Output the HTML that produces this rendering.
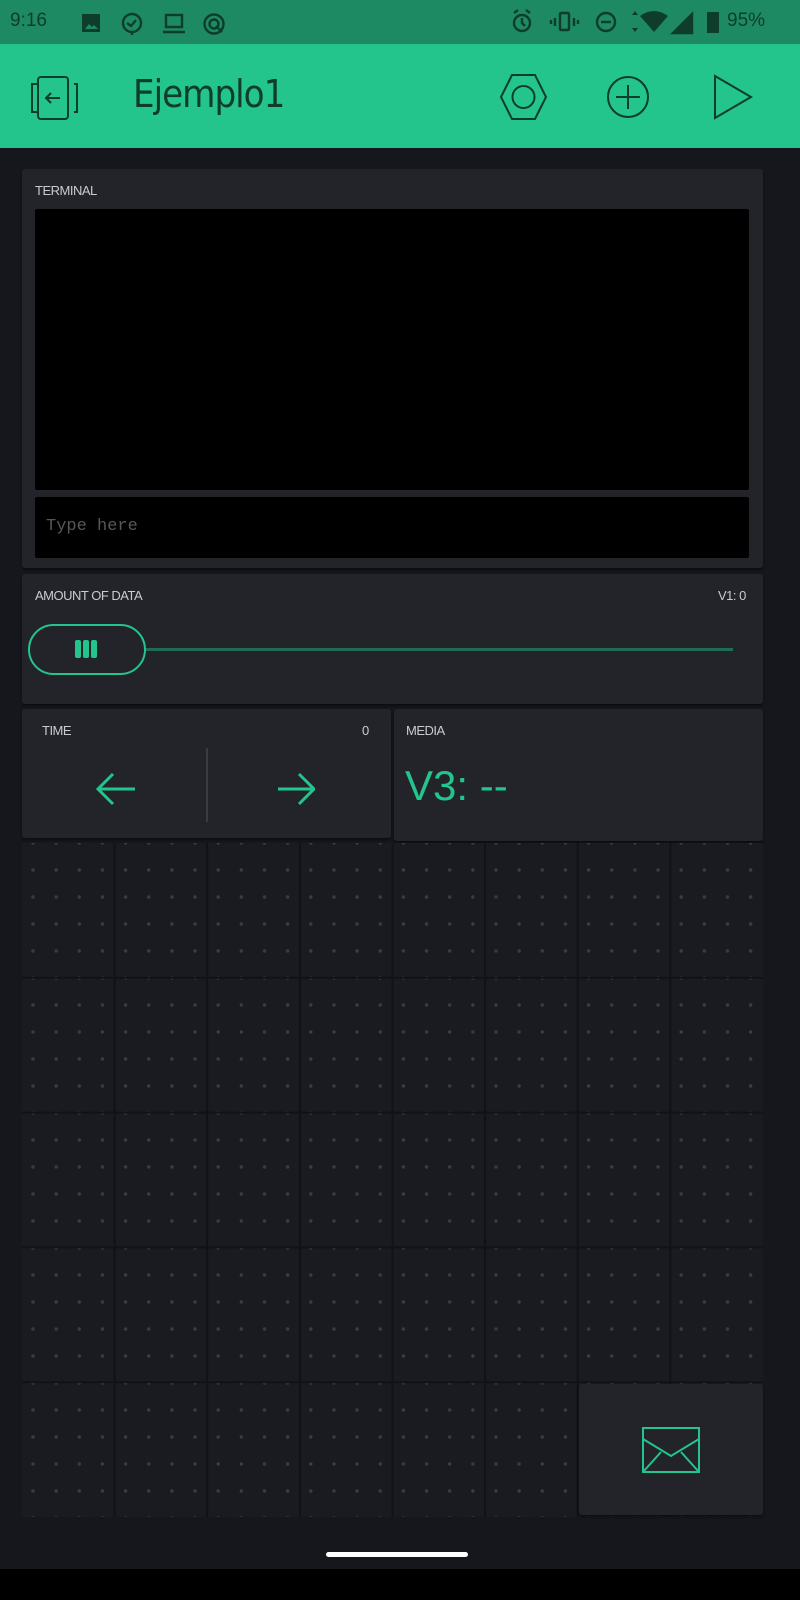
<!DOCTYPE html>
<html><head><meta charset="utf-8"><style>
*{margin:0;padding:0;box-sizing:border-box}
body{width:800px;height:1600px;background:#16171c;position:relative;overflow:hidden;font-family:"DejaVu Sans","Liberation Sans",sans-serif}
.abs{position:absolute}
.card{position:absolute;background:#222429;border-radius:3px;box-shadow:0 2px 2px #0c0d10}
.lbl{position:absolute;color:#c9cbcf;font-size:13px;letter-spacing:-0.5px;font-family:"Liberation Sans",sans-serif}
</style></head><body>
<!-- status bar -->
<div class="abs" style="left:0;top:0;width:800px;height:44px;background:#1d8a63"></div>
<div class="abs" style="left:10px;top:10px;font-size:19px;font-family:'Liberation Sans',sans-serif;color:#0e3d2b">9:16</div>
<svg class="abs" style="left:80px;top:12px" width="160" height="24" viewBox="0 0 160 24" fill="none" stroke="#0e3d2b" stroke-width="2.4">
<rect x="2" y="2" width="18" height="18" fill="#0e3d2b" stroke="none"/><path d="M5 17l4-5 3 3 2-2 4 4z" fill="#1d8a63" stroke="none"/>
<circle cx="52" cy="11" r="9"/><path d="M47 11l4 3 5-6M52 20v3"/>
<rect x="86" y="3" width="16" height="12"/><path d="M83 20h22"/>
<circle cx="134" cy="12" r="9.5"/><circle cx="134" cy="12" r="4.5"/><path d="M136 14l6 6"/>
</svg>
<svg class="abs" style="left:505px;top:8px" width="235" height="28" viewBox="0 0 235 28" fill="none" stroke="#0e3d2b" stroke-width="2.4">
<circle cx="17" cy="15" r="8"/><path d="M17 10v5l3 3M9 5l4-3M25 5l-4-3"/>
<rect x="55" y="5" width="9" height="17" rx="1"/><path d="M50 10v8M69 10v8M46 12v4M73 12v4"/>
<circle cx="101" cy="14" r="9"/><path d="M96 14h10"/>
<path d="M127 7l3-4 3 4zM127 20l3 4 3-4z" fill="#0e3d2b" stroke="none"/>
<path d="M135 8q14-10 28 0l-14 16z" fill="#0e3d2b" stroke="none"/>
<path d="M168 25l19-19v19z" fill="#0e3d2b"/>
<rect x="202" y="4" width="12" height="21" fill="#0e3d2b" stroke="none"/>
</svg>
<div class="abs" style="left:727px;top:10px;font-size:19px;font-family:'Liberation Sans',sans-serif;color:#0e3d2b">95%</div>
<!-- app bar -->
<div class="abs" style="left:0;top:44px;width:800px;height:104px;background:#24c48d"></div>
<svg class="abs" style="left:28px;top:74px" width="52" height="48" viewBox="0 0 52 48" fill="none" stroke="#0e3d2b" stroke-width="2">
<path d="M9 10H4v28h5"/><rect x="10" y="3" width="30" height="42" rx="3"/><path d="M46 10h3v28h-3"/><path d="M32 24H19m4-5l-5 5 5 5"/>
</svg>
<div class="abs" style="left:133px;top:72px;font-size:38px;color:#0e3d2b;font-family:'DejaVu Sans Condensed','DejaVu Sans',sans-serif;letter-spacing:-1px">Ejemplo1</div>
<svg class="abs" style="left:498px;top:72px" width="270" height="50" viewBox="0 0 270 50" fill="none" stroke="#0e3d2b" stroke-width="2">
<path d="M14 3h23l11 22-11 22H14L3 25z"/><circle cx="25.5" cy="25" r="11"/>
<circle cx="130" cy="25" r="20"/><path d="M130 13v24M118 25h24"/>
<path d="M217 4v42l36-21z"/>
</svg>
<!-- terminal -->
<div class="card" style="left:22px;top:169px;width:741px;height:399px"></div>
<div class="lbl" style="left:35px;top:183px">TERMINAL</div>
<div class="abs" style="left:35px;top:209px;width:714px;height:281px;background:#000;border-radius:2px"></div>
<div class="abs" style="left:35px;top:497px;width:714px;height:61px;background:#000;border-radius:2px"></div>
<div class="abs" style="left:46px;top:517px;color:#55575c;font-size:17px;font-family:'Liberation Mono',monospace">Type here</div>
<!-- slider -->
<div class="card" style="left:22px;top:574px;width:741px;height:130px"></div>
<div class="lbl" style="left:35px;top:588px">AMOUNT OF DATA</div>
<div class="lbl" style="left:718px;top:588px">V1: 0</div>
<div class="abs" style="left:145px;top:648px;width:588px;height:3px;background:#1f6c53"></div>
<div class="abs" style="left:28px;top:624px;width:118px;height:51px;border:2px solid #24c48d;border-radius:26px;background:#222429"></div>
<div class="abs" style="left:75px;top:640px;width:6px;height:18px;background:#24c48d;border-radius:2px"></div>
<div class="abs" style="left:83px;top:640px;width:6px;height:18px;background:#24c48d;border-radius:2px"></div>
<div class="abs" style="left:91px;top:640px;width:6px;height:18px;background:#24c48d;border-radius:2px"></div>
<!-- time -->
<div class="card" style="left:22px;top:709px;width:369px;height:129px"></div>
<div class="lbl" style="left:42px;top:723px">TIME</div>
<div class="lbl" style="left:362px;top:723px">0</div>
<div class="abs" style="left:206px;top:748px;width:2px;height:74px;background:#3a3c41"></div>
<svg class="abs" style="left:95px;top:770px" width="220" height="40" viewBox="0 0 220 40" fill="none" stroke="#24c48d" stroke-width="3">
<path d="M40 19H3M18 4L3 19l15 15"/><path d="M183 19h36M204 4l15 15-15 15"/>
</svg>
<!-- media -->
<div class="card" style="left:394px;top:709px;width:369px;height:132px"></div>
<div class="lbl" style="left:406px;top:723px">MEDIA</div>
<div class="abs" style="left:405px;top:762px;color:#24c48d;font-size:42px;font-family:'Liberation Sans',sans-serif">V3: --</div>
<!-- grid -->
<svg class="abs" style="left:22px;top:843px" width="741" height="674">
<defs>
<pattern id="d" width="23.15" height="27" patternUnits="userSpaceOnUse" x="0" y="13.5">
<circle cx="11" cy="13.5" r="1.7" fill="#3a3c42"/>
</pattern>
</defs>
<rect width="741" height="674" fill="#1a1b20"/>
<rect width="741" height="674" fill="url(#d)"/>
<g stroke="#111216" stroke-width="2">
<path d="M92.6 0v674M185.2 0v674M277.9 0v674M370.5 0v674M463.1 0v674M555.7 0v674M648.4 0v674"/>
<path d="M0 134.8h741M0 269.6h741M0 404.4h741M0 539.2h741"/>
</g>
</svg>
<!-- button -->
<div class="card" style="left:579px;top:1384px;width:184px;height:131px"></div>
<svg class="abs" style="left:640px;top:1425px" width="62" height="50" viewBox="0 0 62 50" fill="none" stroke="#24c48d" stroke-width="2">
<rect x="3" y="3" width="56" height="44"/><path d="M3 14l28 17 28-17M3 47l18-20M59 47L41 27"/>
</svg>
<!-- nav -->
<div class="abs" style="left:0;top:1569px;width:800px;height:31px;background:#000"></div>
<div class="abs" style="left:326px;top:1552px;width:142px;height:5px;background:#fff;border-radius:3px"></div>
</body></html>
